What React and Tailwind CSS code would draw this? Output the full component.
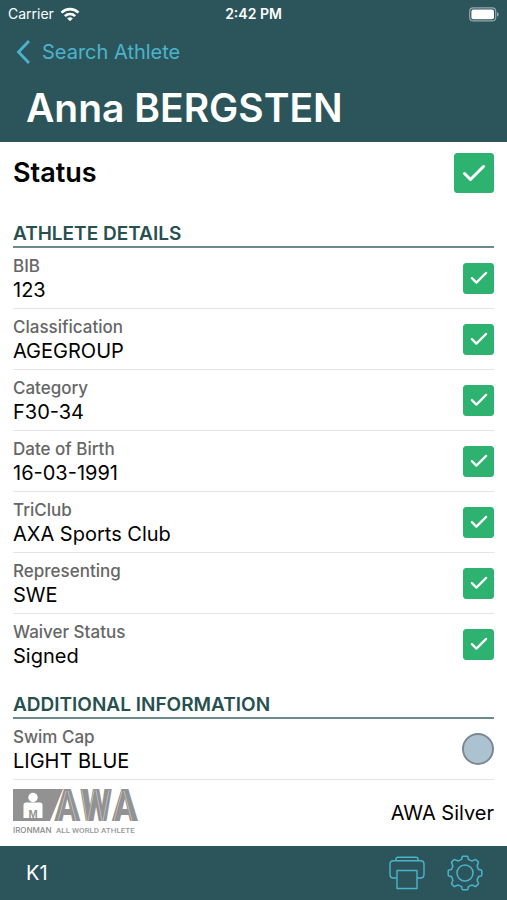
import { useState } from "react";

const details = [
  { id: "bib", label: "BIB", value: "123" },
  { id: "classification", label: "Classification", value: "AGEGROUP" },
  { id: "category", label: "Category", value: "F30-34" },
  { id: "birth", label: "Date of Birth", value: "16-03-1991" },
  { id: "triclub", label: "TriClub", value: "AXA Sports Club" },
  { id: "representing", label: "Representing", value: "SWE" },
  { id: "waiver", label: "Waiver Status", value: "Signed" },
];

function CheckBox({ id, checked, onChange, large }) {
  return (
    <span className={`grid shrink-0 place-items-center ${large ? "size-10" : "size-[31px]"}`}>
      <input
        id={id}
        type="checkbox"
        checked={checked}
        onChange={onChange}
        className="col-start-1 row-start-1 size-full appearance-none rounded-[3px] border border-[#2db36f] bg-white checked:bg-[#2db36f]"
      />
      {checked && (
        <svg
          viewBox="0 0 24 18"
          className={`pointer-events-none col-start-1 row-start-1 ${large ? "w-6" : "w-[18px]"}`}
          fill="none"
          stroke="white"
          strokeWidth="3"
          strokeLinecap="round"
          strokeLinejoin="round"
        >
          <path d="M2.500 9.500 8.500 15.500 21.500 2.500" />
        </svg>
      )}
    </span>
  );
}

function SectionTitle({ children }) {
  return (
    <h2 className="border-b-2 border-[#6b8a8c] text-[19px] leading-6 font-semibold text-[#27504f]">
      {children}
    </h2>
  );
}

function StatusBar() {
  return (
    <div className="grid h-7 grid-cols-3 items-center px-2 text-sm text-white">
      <div className="flex items-center gap-1.5">
        <span>Carrier</span>
        <svg viewBox="0 0 20 15" className="w-5" fill="none" stroke="white" strokeWidth="2.700">
          <path d="M1.500 5.600a12.200 12.200 0 0 1 17 0" />
          <path d="M4.900 9.100a7.300 7.300 0 0 1 10.200 0" />
          <path d="M10 14.300 7.200 11.500a4 4 0 0 1 5.600 0z" fill="white" stroke="none" />
        </svg>
      </div>
      <span className="text-center font-semibold">2:42 PM</span>
      <svg viewBox="0 0 30 15" className="w-[30px] justify-self-end" fill="none">
        <rect x="0.7" y="0.9" width="26" height="13" rx="3.500" stroke="#94a9ac" strokeWidth="1.200" />
        <rect x="2.400" y="2.600" width="22.600" height="9.600" rx="1.800" fill="white" />
        <path d="M28 5.200v4.400c1-.4 1.700-1.200 1.700-2.200s-.7-1.800-1.700-2.200z" fill="#94a9ac" />
      </svg>
    </div>
  );
}

// IRONMAN All World Athlete lockup.
function AwaLogo() {
  return (
    <svg viewBox="0 0 126 48" className="w-[126px] overflow-visible" role="img" aria-label="IRONMAN All World Athlete">
      <path d="M0 0h50L37 32H0z" fill="#929292" />
      <circle cx="20" cy="8.500" r="4.700" fill="white" />
      <path d="M13 13.500h14q2.500 0 2.500 2.500V29h-19V16Q10.500 13.500 13 13.500z" fill="white" />
      <text x="20" y="29" textAnchor="middle" fontSize="11" fontWeight="700" fill="#929292" className="font-['Liberation_Sans',sans-serif]">M</text>
      <text
        x="41"
        y="32"
        fontSize="44"
        fontWeight="900"
        fill="#929292"
        className="font-['Roboto_Condensed','Open_Sans_Condensed','Roboto',sans-serif]"
      >
        AWA
      </text>
      <g stroke="#c4c4c4" strokeWidth="0.8" fill="none">
        <path d="M45 32 53 2M55 2 63 32M69 1 74 32M75 32 81 1M83 1 89 32M90 32 96 1M101 32 109 2M111 2 119 32" />
      </g>
      <text x="0" y="44" fontSize="8" fontWeight="500" fill="#8a8a8a" className="font-['Inter',sans-serif]">IRONMAN</text>
      <text x="43" y="44" fontSize="8" fontWeight="500" fill="#9a9a9a" className="font-['Roboto',sans-serif]">ALL WORLD ATHLETE</text>
    </svg>
  );
}

function PrinterIcon() {
  return (
    <svg viewBox="0 0 36 34" className="w-9" fill="none" stroke="#4bb4cc" strokeWidth="1.400" strokeLinejoin="round">
      <path d="M7 4.700V3.200Q7 1.200 9 1.200H27Q29 1.200 29 3.200V4.700" />
      <path d="M8 22H4.500Q1 22 1 18.500V8.200Q1 4.700 4.500 4.700H31.500Q35 4.700 35 8.200V18.500Q35 22 31.500 22H28" />
      <path d="M8 14.500H28V32.500H8z" />
    </svg>
  );
}

function GearIcon() {
  return (
    <svg viewBox="-18 -18 36 36" className="w-9" fill="none" stroke="#4bb4cc" strokeWidth="1.500" strokeLinejoin="round">
      <circle r="8" />
      <path d="M-2-16.800H2Q2.700-16.800 2.900-16L3.400-13.700Q5.400-12.600 7.300-12.100L9.900-13.300Q10.600-13.700 11.100-13.200L13.200-11.100Q13.700-10.600 13.300-9.900L12.100-7.300Q12.600-5.400 13.700-3.400L16-2.900Q16.800-2.700 16.800-2V2Q16.800 2.700 16 2.900L13.700 3.400Q12.600 5.400 12.100 7.300L13.300 9.900Q13.700 10.600 13.200 11.100L11.100 13.200Q10.600 13.700 9.900 13.300L7.300 12.100Q5.400 12.600 3.400 13.700L2.900 16Q2.700 16.800 2 16.800H-2Q-2.700 16.800-2.900 16L-3.400 13.700Q-5.400 12.600-7.300 12.100L-9.900 13.300Q-10.600 13.700-11.100 13.200L-13.200 11.100Q-13.700 10.600-13.300 9.900L-12.100 7.300Q-12.600 5.400-13.700 3.400L-16 2.900Q-16.800 2.700-16.800 2V-2Q-16.800-2.700-16-2.900L-13.700-3.400Q-12.600-5.400-12.100-7.300L-13.300-9.900Q-13.700-10.600-13.200-11.100L-11.100-13.200Q-10.600-13.700-9.900-13.300L-7.300-12.100Q-5.400-12.600-3.400-13.700L-2.900-16Q-2.700-16.800-2-16.800z" />
    </svg>
  );
}

export default function App() {
  const [status, setStatus] = useState(true);
  const [checks, setChecks] = useState(details.map(() => true));

  const toggle = (index) => {
    setChecks(checks.map((value, i) => (i === index ? !value : value)));
  };

  return (
    <div className="flex min-h-screen flex-col bg-white font-['Inter',sans-serif] text-black">
      <header className="bg-[#2b555b] pb-2">
        <StatusBar />
        <a href="#search" className="flex h-12 items-center gap-3 px-4 text-xl text-[#4bb4cc]">
          <svg viewBox="0 0 14 24" className="h-6 w-3.5" fill="none" stroke="currentColor" strokeWidth="2.800">
            <path d="M13 1 2.500 12 13 23" />
          </svg>
          Search Athlete
        </a>
        <h1 className="px-[26px] pt-1.5 text-[39px] leading-[52px] font-semibold text-white">Anna BERGSTEN</h1>
      </header>

      <main className="flex-1 px-[13px]">
        <div className="flex h-[62px] items-center justify-between">
          <label htmlFor="status" className="text-[27px] leading-10 font-semibold">Status</label>
          <CheckBox id="status" large checked={status} onChange={() => setStatus(!status)} />
        </div>

        <section className="pt-[18px]">
          <SectionTitle>ATHLETE DETAILS</SectionTitle>
          {details.map((item, index) => (
            <div
              key={item.id}
              className="flex h-[61px] items-center justify-between border-b border-[#e4e4e4] last:border-transparent"
            >
              <label htmlFor={item.id}>
                <span className="block text-[17px] leading-6 font-medium text-[#666]">{item.label}</span>
                <span className="block text-xl leading-6">{item.value}</span>
              </label>
              <CheckBox id={item.id} checked={checks[index]} onChange={() => toggle(index)} />
            </div>
          ))}
        </section>

        <section className="pt-[18px]">
          <SectionTitle>ADDITIONAL INFORMATION</SectionTitle>
          <div className="flex h-[61px] items-center justify-between border-b border-[#e4e4e4]">
            <div>
              <p className="text-[17px] leading-6 font-medium text-[#666]">Swim Cap</p>
              <p className="text-xl leading-6">LIGHT BLUE</p>
            </div>
            <span className="size-8 rounded-full border-2 border-[#7c8890] bg-[#adc2d1]" />
          </div>
          <div className="flex h-[66px] items-center justify-between">
            <AwaLogo />
            <span className="text-xl">AWA Silver</span>
          </div>
        </section>
      </main>

      <footer className="flex h-[54px] items-center justify-between bg-[#2b555b] pr-6 pl-[26px] text-xl text-white">
        <span>K1</span>
        <div className="flex items-center gap-[22px]">
          <button type="button" aria-label="Print">
            <PrinterIcon />
          </button>
          <button type="button" aria-label="Settings">
            <GearIcon />
          </button>
        </div>
      </footer>
    </div>
  );
}
